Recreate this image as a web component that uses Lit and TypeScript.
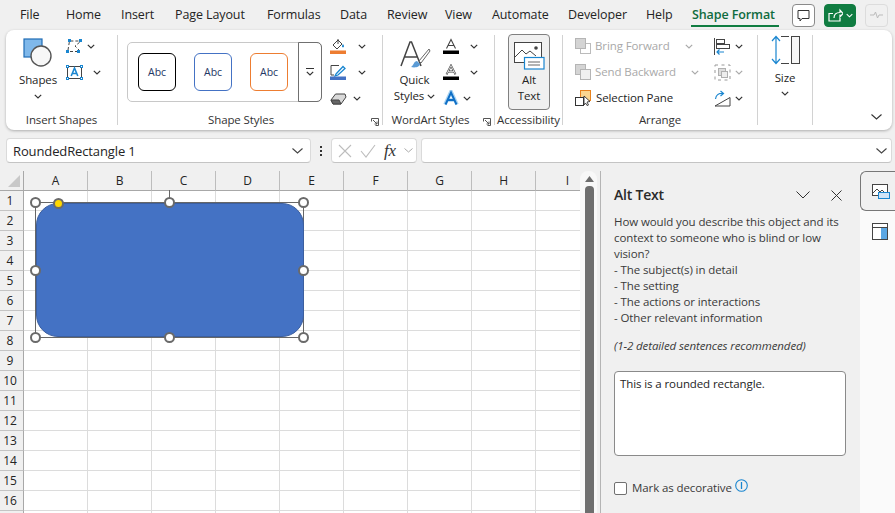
import { LitElement, html, css, svg } from "lit";
import { customElement } from "lit/decorators.js";

const tabs: [string, number][] = [["File",46],["Home",55],["Insert",54],["Page Layout",92],["Formulas",73],["Data",47],["Review",58],["View",47],["Automate",76],["Developer",78],["Help",46]];
const cols = ["A","B","C","D","E","F","G","H","I"];
const rows: (number | string)[] = [...Array.from({length:16},(_, i)=>i+1), ""];
const handles: [number,number][] = [[35.5,31.5],[169.5,31.5],[303.5,31.5],[35.5,99.5],[303.5,99.5],[35.5,166.5],[169.5,166.5],[303.5,166.5]];

const chev = (w = 8, c = "#333") => html`<svg class="chev" width=${w} height="5" viewBox="0 0 8 5"><path d="M.8.8 4 4 7.2.8" fill="none" stroke=${c} stroke-width="1.2"/></svg>`;
const ic = (w: number, h: number, body: unknown) => html`<svg width=${w} height=${h} viewBox="0 0 ${w} ${h}" class="ic">${body}</svg>`;

const shapesIcon = ic(30,30,svg`<rect x="1" y="1" width="18" height="18" fill="#7fb8ea" stroke="#1f6cb5" stroke-width="1.2"/><circle cx="18" cy="18" r="10" fill="#f7f7f7" stroke="#555" stroke-width="1.4"/>`);
const editShape = ic(17,14,svg`<path d="M2 11 3.500 2H13M4 12.500H13M14 12 9 7 14 3" fill="none" stroke="#444" stroke-dasharray="3 2"/><g fill="#1a86d0"><rect x="0" y="11" width="3" height="3"/><rect x="11" y="11" width="3" height="3"/><rect x="2" y="0" width="3" height="3"/><rect x="13" y="0" width="3" height="3"/></g>`);
const textBox = ic(17,15,svg`<rect x="1.5" y="1.5" width="14" height="12" fill="none" stroke="#444"/><path d="M5.2 11 8.5 3l3.3 8M6.3 8.5h4.4" fill="none" stroke="#1a86d0" stroke-width="1.6"/><g fill="#fff" stroke="#1a86d0"><rect x=".5" y=".5" width="2" height="2"/><rect x="14.5" y=".5" width="2" height="2"/><rect x=".5" y="12.5" width="2" height="2"/><rect x="14.5" y="12.5" width="2" height="2"/></g>`);
const fillIcon = ic(16,16,svg`<path d="M3 7 8 2l4 4-5 5z" fill="#fff" stroke="#444"/><path d="M8 1v5" stroke="#444"/><path d="M13 6c1.4 1.6 1.4 3 0 3.4-1.4-.4-1.4-1.8 0-3.4z" fill="#1a86d0"/><rect y="12.5" width="16" height="3.5" fill="#ed7d31"/>`);
const outlineIcon = ic(16,16,svg`<path d="M1 11V1.500h8M1 11h3" fill="none" stroke="#444"/><path d="M6 10 13 2.500l2 2L8 11l-3 1z" fill="#fff" stroke="#1a86d0" stroke-width="1.3"/><rect y="12.500" width="16" height="3.500" fill="#4472c4"/>`);
const eraserIcon = ic(17,13,svg`<path d="M1 8 5.500 2H15l1 3-5 7H3z" fill="#d9d9d9" stroke="#444"/><path d="M1 8l2 4h8l-2-4z" fill="#666" stroke="#444"/>`);
const quickIcon = ic(32,30,svg`<path d="M2 26 11 2h1.500L22 26M5.500 17h13" fill="none" stroke="#444" stroke-width="1.500"/><path d="M30 9 20 21l2 2L31 11z" fill="#fff" stroke="#666"/><path d="M18 21c-3 0-3 4-6 6 4 1 9 0 9-3z" fill="#5b9bd5"/>`);
const aBar = (stroke: boolean) => ic(16,16,svg`<path d="M3.500 10.500 8 1.500l4.500 9M5 7.500h6" fill="none" stroke="#444" stroke-width=${stroke ? 1.8 : 1.1}/>${stroke ? svg`<path d="M3.500 10.500 8 1.500l4.500 9M5 7.500h6" fill="none" stroke="#fff" stroke-width=".7"/>` : ""}<rect y="12.500" width="16" height="3.500" fill="#000"/>`);
const aBlue = ic(16,16,svg`<path d="M2 14.500 8 1.500l6 13M4.500 10h7" fill="none" stroke="#a9d3f2" stroke-width="3.600"/><path d="M2.500 14.500 8 2.500l5.500 12M4.800 10h6.400" fill="none" stroke="#0f6fc6" stroke-width="1.900"/>`);
const altIcon = ic(31,28,svg`<rect x=".5" y=".5" width="27" height="20" fill="#fff" stroke="#444"/><path d="M1 15 8 8l4 4 4-3 6 5" fill="none" stroke="#444"/><circle cx="22" cy="6" r="1.800" fill="#444"/><rect x="10.500" y="15.500" width="19.500" height="11.500" fill="#fff" stroke="#1a86d0" stroke-width="1.200"/><path d="M14 20h12M14 23h12" stroke="#666"/>`);
const bringIcon = ic(16,16,svg`<rect x="5.500" y="5.500" width="10" height="10" fill="#fff" stroke="#bbb"/><rect x=".5" y=".5" width="10" height="10" fill="#d4d4d4" stroke="#b5b5b5"/>`);
const sendIcon = ic(16,16,svg`<rect x=".5" y=".5" width="10" height="10" fill="#d4d4d4" stroke="#b5b5b5"/><rect x="5.500" y="5.500" width="10" height="10" fill="#f0f0f0" stroke="#b5b5b5"/>`);
const paneIcon = ic(17,17,svg`<rect x="5.500" y=".5" width="10" height="10" fill="#fbd68f" stroke="#e8821e"/><rect x=".5" y="7.500" width="8" height="8" fill="#fff" stroke="#333"/><path d="M9 6l6 5.500-3 .5 1.500 3-1.500 .5L10.500 13 9 15z" fill="#fff" stroke="#333" stroke-width=".9"/>`);
const alignIcon = ic(17,17,svg`<path d="M.5 0v17" stroke="#444"/><rect x="2.500" y="1.500" width="8" height="4" fill="#fff" stroke="#444"/><rect x="2.500" y="6.500" width="13" height="4" fill="#fff" stroke="#444"/><path d="M10 14H3M5.500 11.500 3 14l2.500 2.500" fill="none" stroke="#1a86d0" stroke-width="1.200"/>`);
const groupIcon = ic(17,17,svg`<rect x="4.500" y="4.500" width="7" height="7" fill="#ddd" stroke="#b0b0b0"/><rect x="7.500" y="7.500" width="6" height="6" fill="#eee" stroke="#b0b0b0"/><path d="M1 1h15v15H1z" fill="none" stroke="#999" stroke-dasharray="3 3.500"/>`);
const rotateIcon = ic(17,17,svg`<path d="M1 16 16 7.500V16z" fill="#fff" stroke="#444"/><path d="M1.500 9C2 5 5 3 9 3.500M6.500 1l3 2.500L6.500 6" fill="none" stroke="#1a86d0" stroke-width="1.200"/>`);
const sizeIcon = ic(29,30,svg`<path d="M5 1.500v27M1 6l4-4.500L9 6M1 24l4 4.500L9 24" fill="none" stroke="#1a86d0" stroke-width="1.200"/><path d="M10 1.500h8M10 28.500h8" stroke="#444"/><rect x="20.500" y="1.500" width="8" height="27" fill="#f7f7f7" stroke="#444"/>`);
const launcher = ic(8,8,svg`<path d="M.5 3.500V.5h7v7h-3M2 2l4 4M3.500 6H6V3.500" fill="none" stroke="#555"/>`);

@customElement("app-root")
export class AppRoot extends LitElement {
  static styles = css`
    :host { display:block; width:895px; height:513px; overflow:hidden; background:#f0f0f0; color:#242424;
      font:11.500px/16px "Open Sans","Noto Sans",sans-serif; letter-spacing:-.1px; position:relative; }
    svg { display:block; flex:none; }
    .tabbar { display:flex; align-items:center; height:30px; padding-left:20px; font-size:12.500px; letter-spacing:-.1px; }
    .tab { flex:none; line-height:30px; }
    .tab.active { color:#0e6b3e; font-weight:600; position:relative; width:85px; white-space:nowrap; }
    .tab.active::after { content:""; position:absolute; left:-1px; right:-2px; bottom:3px; height:2px; background:#107c41; }
    .tools { margin-left:auto; display:flex; gap:9px; padding-right:7px; align-items:center; }
    .tbtn { width:23px; height:23px; border:1px solid #8a8a8a; border-radius:4px; background:#fff; display:flex; align-items:center; justify-content:center; box-sizing:border-box; }
    .share { width:32px; background:#107c41; border-color:#107c41; gap:3px; }
    .pulse { background:#f0f0f0; border-color:#dcdcdc; }
    .ribbon { margin:0 3px 0 6px; height:100px; box-sizing:border-box; background:#fff; border-radius:8px; box-shadow:0 1px 3px rgba(0,0,0,.28); display:flex; padding-top:5px; position:relative; }
    .group { flex:none; height:90px; box-sizing:border-box; display:flex; flex-direction:column; border-right:1px solid #d2d2d2; position:relative; }
    .body { flex:1; display:flex; min-height:0; }
    .label { height:16px; text-align:center; margin-bottom:-3px; color:#333; white-space:nowrap; }
    .launch { position:absolute; right:3px; bottom:-1px; }
    .big { display:flex; flex-direction:column; align-items:center; }
    .stack { display:grid; grid-auto-rows:22px; row-gap:4px; }
    .row { display:flex; align-items:center; gap:4px; white-space:nowrap; }
    .dim { color:#a9a9a9; }
    .g1 { width:112px; } .g1 .big { width:64px; padding-top:3px; } .g1 .big .ic { margin-bottom:4px; }
    .g1 .stack { margin-left:-4px; }
    .g2 { width:265px; padding:7px 0 0 9px; } .g2 .label { margin:auto 18px -3px -9px; }
    .gallery { display:flex; width:195px; height:60px; box-sizing:border-box; border:1px solid #c8c8c8; border-radius:5px; }
    .tiles { width:170px; flex:none; box-sizing:border-box; display:flex; gap:18px; align-items:center; padding-left:10px; }
    .tile { width:38px; height:38px; box-sizing:border-box; border:1.300px solid #000; border-radius:6px; display:flex; align-items:center; justify-content:center; font-size:10.500px; color:#1f3864; }
    .tile.b { border-color:#4472c4; } .tile.o { border-color:#ed7d31; }
    .more { width:24px; margin:-1px -1px -1px 0; border:1px solid #707070; border-radius:0 5px 5px 0; box-sizing:border-box; display:flex; flex-direction:column; align-items:center; justify-content:center; gap:2px; }
    .more i { width:8px; height:1px; background:#333; }
    .g3 { width:112px; } .g3 .big { width:57px; padding-top:5px; margin-left:3px; } .g3 .big .ic { margin-bottom:2px; }
    .g3 .label { margin-right:16px; }
    .g4 { width:68px; } .g5 { width:195px; } .g6 { width:55px; }
    .alt { margin:-1px 0 0 13px; width:42px; height:76px; box-sizing:border-box; background:#f0f0f0; border:1px solid #808080; border-radius:4px; display:flex; flex-direction:column; align-items:center; padding-top:7px; }
    .alt .ic { margin-bottom:2px; }
    .g6 .big { width:100%; }
    .collapse { position:absolute; right:10px; bottom:10px; }
    .fbar { display:flex; margin:8px 3px 0 6px; height:25px; gap:4px; align-items:center; }
    .box { height:25px; box-sizing:border-box; background:#fff; border:1px solid #dadada; border-bottom-color:#c4c4c4; border-radius:4px; display:flex; align-items:center; }
    .name { width:305px; padding:0 7px 0 6px; justify-content:space-between; font-size:13px; letter-spacing:-.12px; }
    .dots { width:12px; display:flex; flex-direction:column; align-items:center; gap:2px; }
    .dots i { width:2px; height:2px; background:#333; }
    .fx { width:86px; padding-left:6px; gap:8px; font:italic 17px "Liberation Serif",serif; color:#333; }
    .fin { flex:1; justify-content:flex-end; padding-right:4px; }
    .main { display:flex; margin-top:8px; height:342px; }
    .sheet { width:580px; flex:none; overflow:hidden; position:relative; background:#fff; }
    .hrow { display:flex; height:20px; background:#f0f0f0; }
    .corner { width:24px; flex:none; box-sizing:border-box; border-right:1px solid #a8a8a8; border-bottom:1px solid #a8a8a8; display:flex; align-items:flex-end; justify-content:flex-end; padding:0 3px 3px 0; }
    .ch { width:64px; flex:none; box-sizing:border-box; border-right:1px solid #bdbdbd; border-bottom:1px solid #a8a8a8; text-align:center; font-size:12px; line-height:19px; }
    .srow { display:flex; height:20px; }
    .rh { width:24px; flex:none; box-sizing:border-box; background:#f0f0f0; border-right:1px solid #a8a8a8; border-bottom:1px solid #c4c4c4; text-align:center; padding-right:3px; font-size:12px; line-height:19px; }
    .cell { width:64px; flex:none; box-sizing:border-box; border-right:1px solid #dcdcdc; border-bottom:1px solid #dcdcdc; }
    .shape { position:absolute; left:36px; top:32px; width:268px; height:134px; box-sizing:border-box; background:#4472c4; border:1px solid #3c5f9f; border-radius:22px; }
    .frame { position:absolute; left:35px; top:31px; width:269px; height:136px; box-sizing:border-box; border:1px solid #666; }
    .stub { position:absolute; left:169px; top:19px; width:1px; height:12px; background:#666; }
    .h { position:absolute; width:11px; height:11px; box-sizing:border-box; margin:-5.500px 0 0 -5.500px; border-radius:50%; background:#fff; border:2px solid #6a6a6a; }
    .h.y { background:#ffd800; }
    .sb { width:17px; flex:none; background:#f8f8f8; border-radius:8px 8px 0 0; display:flex; flex-direction:column; align-items:center; padding:5px 0 0 1px; box-sizing:border-box; }
    .thumb { margin-top:4px; width:9px; flex:1; background:#6e6e6e; border-radius:4px 4px 0 0; }
    .pane { margin-left:3px; width:260px; flex:none; box-sizing:border-box; border-left:1px solid #b4b4b4; padding:14px 14px 0 13px; color:#3a3a3a; font-size:11.500px; }
    .phead { display:flex; align-items:center; height:20px; margin-bottom:9px; gap:21px; padding-right:4px; }
    .ptitle { font-size:14px; font-weight:600; letter-spacing:-.2px; color:#2a2a2a; margin-right:auto; }
    .hint { font-style:italic; margin:12px 0 17px; }
    .ta { height:85px; width:232px; box-sizing:border-box; background:#fff; border:1px solid #8a8a8a; border-radius:4px; padding:4px 5px; color:#242424; }
    .chk { display:flex; margin-top:24px; gap:5px; align-items:center; }
    .cb { width:13px; height:13px; box-sizing:border-box; background:#fff; border:1px solid #707070; border-radius:2px; }
    .info { margin:-6px 0 0 -2px; }
    .strip { flex:1; background:#fafafa; padding-top:0; }
    .stab { height:40px; box-sizing:border-box; background:#f0f0f0; border:1px solid #777; border-right:none; border-radius:6px 0 0 6px; display:flex; align-items:center; justify-content:center; padding-left:5px; margin-bottom:12px; }
    .stab2 { display:flex; justify-content:center; padding-left:4px; }
  `;

  render() {
    return html`
      <div class="tabbar">
        ${tabs.map(([t, w]) => html`<div class="tab" style="width:${w}px">${t}</div>`)}
        <div class="tab active">Shape Format</div>
        <div class="tools">
          <div class="tbtn">${ic(13,13,svg`<path d="M1 1.500h11v8H5L3 12V9.500H1z" fill="#fff" stroke="#333"/>`)}</div>
          <div class="tbtn share">${ic(15,14,svg`<path d="M12 8v5H1V5.500h4M6 10c0-4 2-5.500 6-5.500V2l3 3.500L12 9V6.500" fill="none" stroke="#fff" stroke-width="1.200"/>`)}${chev(7,"#fff")}</div>
          <div class="tbtn pulse">${ic(13,8,svg`<path d="M0 4h4l1.500-3 2 6L9 4h4" fill="none" stroke="#bbb"/>`)}</div>
        </div>
      </div>

      <div class="ribbon">
        <div class="group g1">
          <div class="body">
            <div class="big">${shapesIcon}<div>Shapes</div><div style="margin-top:6px">${chev()}</div></div>
            <div class="stack">
              <div class="row">${editShape}<span>${chev()}</span></div>
              <div class="row">${textBox}<span style="margin-left:6px">${chev()}</span></div>
            </div>
          </div>
          <div class="label">Insert Shapes</div>
        </div>
        <div class="group g2">
          <div class="body" style="flex:none">
            <div class="gallery">
              <div class="tiles"><div class="tile">Abc</div><div class="tile b">Abc</div><div class="tile o">Abc</div></div>
              <div class="more"><i></i>${chev()}</div>
            </div>
            <div class="stack" style="margin:-7px 0 0 8px">
              <div class="row">${fillIcon}<span style="margin-left:8px">${chev()}</span></div>
              <div class="row">${outlineIcon}<span style="margin-left:8px">${chev()}</span></div>
              <div class="row">${eraserIcon}<span style="margin-left:2px">${chev()}</span></div>
            </div>
          </div>
          <div class="label">Shape Styles</div>
          <div class="launch">${launcher}</div>
        </div>
        <div class="group g3">
          <div class="body">
            <div class="big">${quickIcon}<div>Quick</div><div class="row" style="gap:3px">Styles ${chev()}</div></div>
            <div class="stack">
              <div class="row">${aBar(false)}<span style="margin-left:7px">${chev()}</span></div>
              <div class="row">${aBar(true)}<span style="margin-left:7px">${chev()}</span></div>
              <div class="row">${aBlue}<span>${chev()}</span></div>
            </div>
          </div>
          <div class="label">WordArt Styles</div>
          <div class="launch">${launcher}</div>
        </div>
        <div class="group g4">
          <div class="body"><div class="alt">${altIcon}<div>Alt</div><div>Text</div></div></div>
          <div class="label">Accessibility</div>
        </div>
        <div class="group g5">
          <div class="body">
            <div class="stack" style="margin-left:12px;width:139px">
              <div class="row dim">${bringIcon}<span style="width:86px">Bring Forward</span>${chev(8,"#aaa")}</div>
              <div class="row dim">${sendIcon}<span style="width:92px">Send Backward</span>${chev(8,"#aaa")}</div>
              <div class="row">${paneIcon}<span>Selection Pane</span></div>
            </div>
            <div class="stack">
              <div class="row">${alignIcon}${chev()}</div>
              <div class="row">${groupIcon}${chev(8,"#aaa")}</div>
              <div class="row">${rotateIcon}${chev()}</div>
            </div>
          </div>
          <div class="label">Arrange</div>
        </div>
        <div class="group g6">
          <div class="body"><div class="big">${sizeIcon}<div style="margin-top:5px">Size</div><div style="margin-top:5px">${chev()}</div></div></div>
          <div class="label"></div>
        </div>
        <div class="collapse">${ic(11,6,svg`<path d="M.5.500 5.500 5l5-4.500" fill="none" stroke="#333" stroke-width="1.100"/>`)}</div>
      </div>

      <div class="fbar">
        <div class="box name"><span>RoundedRectangle 1</span>${ic(11,6,svg`<path d="M.5.500 5.500 5l5-4.500" fill="none" stroke="#444" stroke-width="1.100"/>`)}</div>
        <div class="dots"><i></i><i></i><i></i></div>
        <div class="box fx">
          ${ic(14,14,svg`<path d="M1 1l12 12M13 1 1 13" stroke="#bdbdbd" stroke-width="1.100"/>`)}
          ${ic(16,14,svg`<path d="M1 7l5 6L15 1" fill="none" stroke="#bdbdbd" stroke-width="1.100"/>`)}
          <span>fx</span>
          ${ic(9,5,svg`<path d="M.5.500 4.500 4l4-3.500" fill="none" stroke="#aaa"/>`)}
        </div>
        <div class="box fin">${ic(11,6,svg`<path d="M.5.500 5.500 5l5-4.500" fill="none" stroke="#444" stroke-width="1.100"/>`)}</div>
      </div>

      <div class="main">
        <div class="sheet">
          <div class="hrow">
            <div class="corner">${ic(12,12,svg`<path d="M12 0v12H0z" fill="#c8c8c8"/>`)}</div>
            ${cols.map((c) => html`<div class="ch">${c}</div>`)}
          </div>
          ${rows.map((r) => html`<div class="srow"><div class="rh">${r}</div>${cols.map(() => html`<div class="cell"></div>`)}</div>`)}
          <div class="stub"></div>
          <div class="frame"></div>
          <div class="shape"></div>
          ${handles.map(([x, y]) => html`<div class="h" style="left:${x}px;top:${y}px"></div>`)}
          <div class="h y" style="left:58px;top:32.500px"></div>
        </div>
        <div class="sb">${ic(9,6,svg`<path d="M4.500 0 9 6H0z" fill="#6e6e6e"/>`)}<div class="thumb"></div></div>
        <div class="pane">
          <div class="phead">
            <div class="ptitle">Alt Text</div>
            ${ic(14,8,svg`<path d="M.5.500 7 7l6.500-6.500" fill="none" stroke="#333"/>`)}
            ${ic(11,11,svg`<path d="M.5.500l10 10M10.500.500l-10 10" stroke="#333"/>`)}
          </div>
          <div>How would you describe this object and its context to someone who is blind or low vision?<br>- The subject(s) in detail<br>- The setting<br>- The actions or interactions<br>- Other relevant information</div>
          <div class="hint">(1-2 detailed sentences recommended)</div>
          <div class="ta">This is a rounded rectangle.</div>
          <div class="chk"><div class="cb"></div><span>Mark as decorative</span>
            <span class="info">${ic(13,13,svg`<circle cx="6.500" cy="6.500" r="5.800" fill="none" stroke="#1a86d0" stroke-width="1.100"/><path d="M6.500 3v7" stroke="#1a86d0" stroke-width="1.300"/>`)}</span></div>
        </div>
        <div class="strip">
          <div class="stab">${ic(18,15,svg`<rect x=".5" y=".5" width="15" height="11" fill="#fff" stroke="#444"/><path d="M1 9l4-4 3 3 2-2 3 3" fill="none" stroke="#444"/><rect x="6.500" y="8.500" width="11" height="6" fill="#cfe4f7" stroke="#1a86d0"/>`)}</div>
          <div class="stab2">${ic(16,17,svg`<rect x=".5" y=".5" width="15" height="16" fill="#fff" stroke="#444"/><path d="M.5 4.500h15" stroke="#444"/><rect x="9" y="5" width="6" height="11" fill="#5ba7e3"/>`)}</div>
        </div>
      </div>
    `;
  }
}
